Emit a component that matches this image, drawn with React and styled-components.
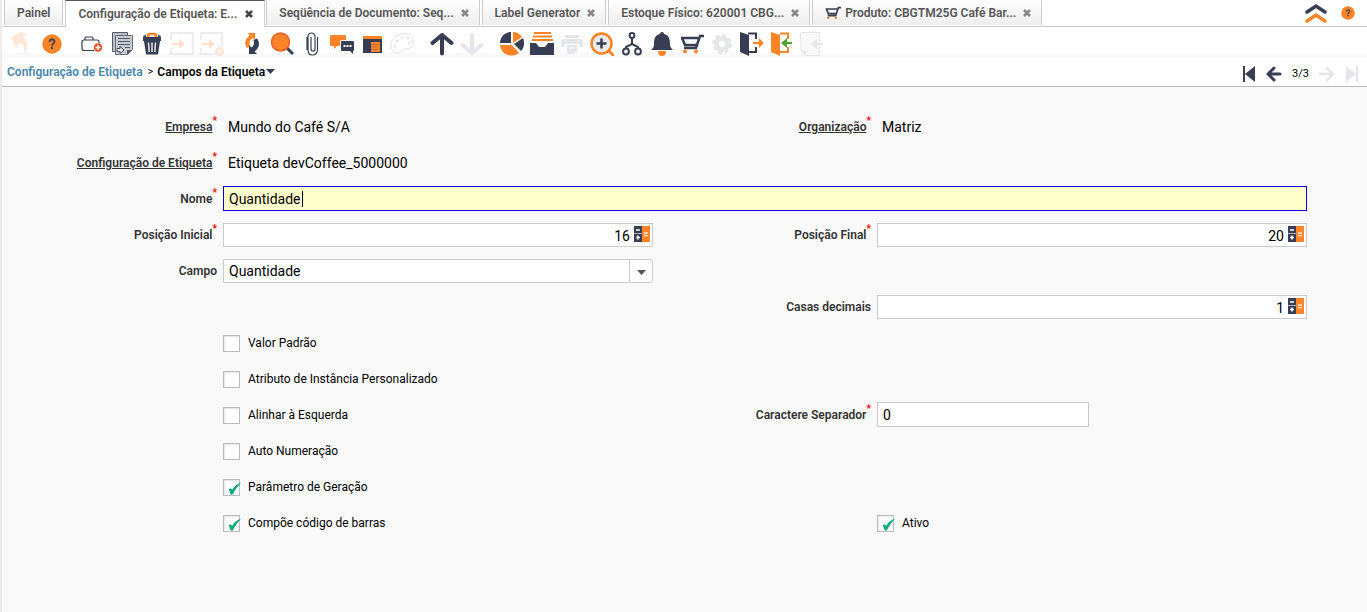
import React, { useState } from "react";
import styled, { createGlobalStyle, css } from "styled-components";

const navy = "#373d52";
const orange = "#ff8427";

const GlobalStyle = createGlobalStyle`
  * { box-sizing: border-box; }
  html, body { margin: 0; background: #f9f9f9; }
  body, button, input, select {
    font-family: Roboto, "Liberation Sans", sans-serif;
    font-size: 12px;
    color: #000;
  }
  button { padding: 0; border: 0; background: none; cursor: pointer; }
  svg { display: block; }
`;

const Page = styled.div`
  min-height: 100vh;
  border-left: 2px solid #ececec;
  background: #f9f9f9;
`;

const TabBar = styled.header`
  display: flex;
  height: 27px;
  padding-left: 2px;
  background: linear-gradient(#ccc, #ccc) bottom / 100% 1px no-repeat #fff;
`;

const Tab = styled.div`
  display: flex;
  align-items: center;
  gap: ${(p) => (p.$active ? "7px" : "6px")};
  height: 25px;
  margin-right: 2px;
  padding: 0 ${(p) => (p.$fixed ? "12px" : "9px")} 0 12px;
  border-left: 1px solid #ccc;
  border-right: 1px solid #ccc;
  background: linear-gradient(#fefefe, #eee);
  ${(p) =>
    p.$active &&
    css`
      height: 27px;
      margin-right: 1px;
      padding-right: 10px;
      padding-bottom: 1px;
      border-top: 1px solid #555;
      background: #fff;
    `}
`;

const TabTitle = styled.button`
  display: flex;
  align-items: center;
  gap: 4px;
  line-height: 16px;
  font-weight: 600;
  color: #555;
  white-space: nowrap;
`;

const TabClose = styled.button`
  color: ${(p) => (p.$active ? "#444" : "#888")};
`;

const TabBarEnd = styled.div`
  display: flex;
  align-items: center;
  gap: 14px;
  height: 25px;
  margin-left: auto;
  padding-right: 12px;
`;

const Toolbar = styled.div`
  display: flex;
  gap: 16px;
  height: 30px;
  padding: 5px 8px 0;
  background: linear-gradient(#fff 26px, #f9f9f9 26px);
`;

const ToolGroup = styled.div`
  display: flex;
  gap: 6px;
`;

const ToolButton = styled.button`
  width: 24px;
  height: 24px;
`;

const Breadcrumb = styled.nav`
  display: flex;
  align-items: center;
  height: 30px;
  padding: 0 8px 0 5px;
  border-bottom: 1px solid #bbb;
  background: #fff;
  font-weight: 600;
  line-height: 16px;
`;

const CrumbLink = styled.a`
  color: #4a85ab;
  text-decoration: none;
`;

const CrumbSeparator = styled.span`
  margin: 0 4px 0 5px;
  font-weight: 400;
  font-size: 11px;
`;

const CrumbMenu = styled.button`
  display: flex;
  align-items: center;
  gap: 1px;
  font-weight: 600;
`;

const Pager = styled.div`
  display: flex;
  align-items: center;
  gap: 10px;
  margin-left: auto;
  padding-top: 4px;
  font-weight: 400;
  font-size: 11px;
`;

const Form = styled.form`
  display: grid;
  grid-template-columns:
    minmax(0, 218fr) minmax(0, 436fr) minmax(0, 218fr)
    minmax(0, 436fr) minmax(0, 57fr);
  grid-auto-rows: 36px;
  padding: 22px 0;
`;

const LabelCell = styled.div`
  grid-column: ${(p) => p.$col};
  grid-row: ${(p) => p.$row};
  display: flex;
  justify-content: flex-end;
  align-items: center;
  padding-right: 3px;
`;

const Label = styled.label`
  color: #333;
  font-weight: 600;
  line-height: 16px;
  white-space: nowrap;
  text-decoration: ${(p) => (p.$linked ? "underline" : "none")};
`;

const Required = styled.span`
  align-self: flex-start;
  margin-top: 6px;
  color: #f00;
  font-size: 10px;
  line-height: 12px;
  font-weight: 700;
`;

const FieldCell = styled.div`
  grid-column: ${(p) => p.$col};
  grid-row: ${(p) => p.$row};
  display: flex;
  align-items: ${(p) => (p.$centered ? "center" : "flex-end")};
  padding: 0 3px ${(p) => (p.$centered ? "0" : "6px")};
`;

const ReadOnlyValue = styled.output`
  padding: 0 5px;
  font-size: 14px;
  line-height: 24px;
`;

const InputFrame = styled.div`
  position: relative;
  flex: ${(p) => (p.$short ? "0 0 50%" : "1")};
  padding-right: ${(p) => (p.$short ? "3px" : "0")};
  display: flex;
`;

const TextInput = styled.input`
  width: 100%;
  height: 25px;
  padding: 0 5px;
  border: 1px solid ${(p) => (p.$active ? "#0000e0" : "#ccc")};
  border-radius: 0;
  outline: none;
  background: ${(p) => (p.$active ? "#ffffcc" : "#fff")};
  font-size: 14px;
`;

const Caret = styled.span`
  position: absolute;
  left: 79px;
  top: 5px;
  width: 1px;
  height: 16px;
  background: #000;
`;

const NumberBox = styled.div`
  flex: 1;
  display: flex;
  height: 24px;
  border: 1px solid #ccc;
  background: #fff;
`;

const NumberInput = styled.input`
  flex: 1;
  min-width: 0;
  padding: 2px 3px 0;
  border: 0;
  outline: none;
  background: none;
  font-size: 14px;
  text-align: right;
`;

const CalculatorButton = styled.button`
  width: 19px;
  padding: 2px 2px 4px 1px;
`;

const SelectBox = styled.div`
  flex: 1;
  display: grid;
  grid-template-columns: minmax(0, 1fr) 23px;
  height: 24px;
  border: 1px solid #ccc;
  border-radius: 0 3px 3px 0;
  background: #fff;
`;

const Select = styled.select`
  grid-area: 1 / 1 / 2 / 3;
  padding: 0 5px;
  border: 0;
  outline: none;
  appearance: none;
  background: none;
  font-size: 14px;
`;

const SelectArrow = styled.span`
  grid-area: 1 / 2;
  display: flex;
  align-items: center;
  justify-content: center;
  padding-top: 3px;
  border-left: 1px solid #ccc;
  pointer-events: none;
`;

const CheckLabel = styled.label`
  display: flex;
  gap: 8px;
  line-height: 16px;
`;

const CheckFrame = styled.span`
  display: grid;
  width: 17px;
  height: 17px;

  svg {
    grid-area: 1 / 1;
    pointer-events: none;
    overflow: visible;
    display: none;
    z-index: 1;
  }
  input:checked + svg { display: block; }
`;

const CheckInput = styled.input`
  grid-area: 1 / 1;
  width: 17px;
  height: 17px;
  margin: 0;
  appearance: none;
  border: 1px solid #bbb;
  background: #fff;
  box-shadow: inset 1px 1px 2px #e4e4e4;
`;

function Icon({ w = 24, h = 24, box, children }) {
  return (
    <svg width={w} height={h} viewBox={box || `0 0 ${w} ${h}`} fill="none" aria-hidden="true">
      {children}
    </svg>
  );
}

const peach = "#ffe8d8";
const faint = "#e4e6e9";

const icons = {
  undo: <path d="M1 5 11 0l6 2-4 3c5 4 6 10 2 17 0-6-2-10-6-11l-3 6Z" fill={peach} />,
  help: (
    <>
      <circle cx="12" cy="12" r="9.7" fill={orange} />
      <path d="M9.500 10c0-3.400 5-3.400 5-.4 0 2-2.500 2-2.500 4.200" stroke={navy} strokeWidth="1.800" />
      <path d="M11 15h2v2h-2z" fill={navy} />
    </>
  ),
  create: (
    <>
      <path d="M14 18.500H4q-2 0-2-2V10q0-2 2-2h13q2 0 2 2v1M5 7.500V6q0-1 1-1h6q1 0 1 1v1.500" stroke={navy} strokeWidth="1.200" />
      <circle cx="18" cy="15.500" r="4.200" fill="#e9532a" />
      <path d="M18 13v5M15.500 15.500h5" stroke="#fff" strokeWidth="1.500" />
    </>
  ),
  copy: (
    <>
      <path d="M2.500.5h15v19h-15z" fill="#b9bec7" stroke="#555b68" />
      <path d="M5.500 3.500h17v14l-5 5h-12z" fill="#c6cad2" stroke="#6a707d" />
      <path d="M8 6.500h12M8 9.500h12M8 12.500h12M15 15.500h5" stroke="#555b68" />
      <path d="M17 23v-5h5z" fill="#555b68" />
      <path d="M7 16.500h3v-2l4 3.500-4 3.500v-2H7z" fill="#e6e8ec" stroke="#454b5a" />
    </>
  ),
  remove: (
    <>
      <path d="M8 5V4q0-2 2-2h4q2 0 2 2v1" stroke={orange} strokeWidth="2.500" />
      <path d="M3 6q0-3 3-3v2h12V3q3 0 3 3v3H3z" fill={navy} />
      <path d="M4 9h16l-2 13.500H6z" fill={navy} />
      <path d="m8.500 10.500.7 9.500m5.600 0 .7-9.500M12 10.500v9.500" stroke="#e4e6ea" strokeWidth="1.500" />
    </>
  ),
  save: (
    <>
      <path d="M1 8V1h22v21H1v-6" stroke="#e6e7ea" strokeWidth="1.500" />
      <path d="M2 12h9" stroke="#ffe0cb" strokeWidth="2" />
      <path d="m9 7 6 5-6 5z" fill="#ffe0cb" />
    </>
  ),
  saveNew: (
    <>
      <path d="M1 8V1h21v14M15 22H1v-6" stroke="#e6e7ea" strokeWidth="1.500" />
      <path d="M2 12h8" stroke="#ffe0cb" strokeWidth="2" />
      <path d="m9 7 6 5-6 5z" fill="#ffe0cb" />
      <circle cx="19.500" cy="19.500" r="4.500" fill="#ffe5d5" />
      <path d="M19.500 17v5M17 19.500h5" stroke="#fff" />
    </>
  ),
  refresh: (
    <>
      <path d="M8 1h7v7l-2.500-2C10 8 9 10 10 14l-3 2C4 12 5 7 9.500 3.500z" fill={orange} />
      <path d="M9 22V13l2.500 2.500c2.500-2 3-4 2-7.500L17 6.500c3 4 3 9-2.500 13L17 22z" fill={navy} />
    </>
  ),
  find: (
    <>
      <path d="m16 15 7 7" stroke={navy} strokeWidth="3" />
      <circle cx="10.500" cy="10" r="9" fill={orange} stroke="#e9602a" strokeWidth="1.500" />
    </>
  ),
  attach: (
    <path
      d="M11 5v12q0 2 2 2t2-2V5q0-4-3.500-4T8 5v13q0 5 4.500 5t5-5V5M7 5v13"
      stroke={navy}
      strokeWidth="1.200"
    />
  ),
  chat: (
    <>
      <path d="M1 3h14q1 0 1 1v4h-4q-2 0-2 2v4H7l-3 3v-3H1q-1 0-1-1V4q0-1 1-1Z" fill={orange} />
      <path d="M12 9h11q1 0 1 1v8q0 1-1 1v3l-3-3h-8q-1 0-1-1v-8q0-1 1-1Z" fill={navy} />
      <path d="M13.500 14h8" stroke="#fff" strokeWidth="2" strokeDasharray="2 1" />
    </>
  ),
  grid: (
    <>
      <path d="M3 4h19v17H3z" fill={navy} />
      <path d="M3 4h19v3H3zM11 10h9v10h-9z" fill={orange} />
      <path d="M11 12.500h7M11 15h7M11 17.500h7" stroke="#c07038" />
    </>
  ),
  palette: (
    <>
      <path d="M15 2C7 1 1 7 1 13s4 9 8 8 3-5 6-4 8-2 8-7-3-8-8-8Z" stroke="#dfe1e4" />
      <circle cx="5" cy="14" r="1.500" fill="#ffe6d8" />
      <circle cx="7" cy="9" r="1.500" fill={faint} />
      <circle cx="12" cy="6" r="1.500" fill="#ffe6d8" />
      <circle cx="18" cy="6" r="1.500" fill={faint} />
      <circle cx="19" cy="11" r="1.500" fill="#ffe6d8" />
    </>
  ),
  up: <path d="M12 21.500V3M2.500 11 12 3l9.500 8" stroke={navy} strokeWidth="4" strokeLinecap="round" strokeLinejoin="round" />,
  down: <path d="M12 2.500v18.500M2.500 13l9.500 8 9.500-8" stroke={faint} strokeWidth="4" strokeLinecap="round" strokeLinejoin="round" />,
  pie: (
    <>
      <path d="M11 0v11H0C0 5 5 0 11 0Z" fill={navy} />
      <path d="M13 0c4 0 7 2 9 5l-9 6z" fill={orange} />
      <path d="M23 6c2 5 1 10-2 13l-7-7z" fill={navy} />
      <path d="M0 13h12l7 8C11 27 1 22 0 13Z" fill={orange} />
    </>
  ),
  archive: (
    <>
      <path d="M4 1h17M3 4.500h19M2 8h21" stroke={orange} strokeWidth="1.800" />
      <path d="M0 11h6l3 4h6l3-4h6v12H0z" fill={navy} />
    </>
  ),
  print: (
    <>
      <path d="M5 3h14v3H5zM3 7h18q2 0 2 2v6h-4v-3H5v3H1V9q0-2 2-2ZM7 13h10v6l-3 3H7z" fill={faint} />
      <path d="M9 16h6" stroke="#fff" />
    </>
  ),
  zoom: (
    <>
      <path d="m18 18 5 5" stroke={orange} strokeWidth="3" strokeLinecap="round" />
      <circle cx="11.500" cy="11.500" r="10" fill="#e9ebee" stroke={orange} strokeWidth="2.500" />
      <path d="M11.500 6.500v10M6.500 11.500h10" stroke={navy} strokeWidth="2.500" />
    </>
  ),
  workflow: (
    <g stroke={navy} strokeWidth="2">
      <circle cx="12" cy="3.500" r="2.400" />
      <circle cx="6" cy="19.500" r="2.900" />
      <circle cx="18" cy="19.500" r="2.900" />
      <path d="M12 6v6L6 15v2m6-5 6 3v2" />
    </g>
  ),
  bell: (
    <>
      <path d="M8 19h8q0 5-4 5t-4-5Z" fill={orange} />
      <path d="M12 0q2 0 2 2c5 1 6 5 6 10 0 3 1 4 3 6H1c2-2 3-3 3-6C4 7 5 3 10 2q0-2 2-2Z" fill={navy} />
    </>
  ),
  cart: (
    <>
      <path d="M24 4h-4l-4 12H4M1 6h17M2 6l3 7h11" stroke={navy} strokeWidth="2.500" />
      <circle cx="5" cy="19.500" r="2" fill={orange} />
      <circle cx="16" cy="19.500" r="2" fill={orange} />
    </>
  ),
  gear: (
    <>
      <circle cx="12" cy="12" r="8.500" stroke={faint} strokeWidth="3" strokeDasharray="3.800 2.875" />
      <circle cx="12" cy="12" r="5.500" stroke={faint} strokeWidth="5" />
    </>
  ),
  exit: (
    <>
      <path d="M8 1.500h8V7M16 15v5H8" stroke={navy} strokeWidth="2" />
      <path d="m0 0 9 3v21l-9-4z" fill={navy} />
      <path d="M13 11h8" stroke={orange} strokeWidth="2.200" />
      <path d="m19 6 5 5-5 5z" fill={orange} />
    </>
  ),
  enter: (
    <>
      <path d="M10 1.500h8V7M18 15v5h-8" stroke={orange} strokeWidth="2" />
      <path d="m1 0 9 3v21l-9-4z" fill={orange} />
      <path d="M15 11h7" stroke="#52a435" strokeWidth="2.200" />
      <path d="m17 6-6 5 6 5z" fill="#52a435" />
    </>
  ),
  page: (
    <>
      <path d="M.5.500h19v23H6l-5-5z" fill="#f8f8f8" stroke={faint} />
      <path d="M1 18.500h5v5z" fill={faint} />
      <path d="M14 12h9" stroke={faint} strokeWidth="2.200" />
      <path d="m17 7-6 5 6 5z" fill={faint} />
    </>
  ),
};

const toolGroups = [
  [["undo", "Desfazer"], ["help", "Ajuda"]],
  [
    ["create", "Novo"], ["copy", "Copiar"], ["remove", "Excluir"],
    ["save", "Salvar"], ["saveNew", "Salvar e criar"],
  ],
  [
    ["refresh", "Atualizar"], ["find", "Localizar"], ["attach", "Anexo"],
    ["chat", "Conversa"], ["grid", "Grade"], ["palette", "Personalizar"],
  ],
  [["up", "Registro pai"], ["down", "Detalhe"]],
  [
    ["pie", "Relatório"], ["archive", "Arquivo"], ["print", "Imprimir"],
    ["zoom", "Zoom"], ["workflow", "Fluxo de trabalho"], ["bell", "Solicitações"],
    ["cart", "Produto"], ["gear", "Processo"], ["exit", "Exportar"],
    ["enter", "Importar"], ["page", "Arquivo CSV"],
  ],
];

const tabs = [
  { title: "Painel", fixed: true },
  { title: "Configuração de Etiqueta: E...", active: true },
  { title: "Seqüência de Documento: Seq..." },
  { title: "Label Generator" },
  { title: "Estoque Físico: 620001 CBG..." },
  { title: "Produto: CBGTM25G Café Bar...", cart: true },
];

const checks = [
  [7, 2, "Valor Padrão", false],
  [8, 2, "Atributo de Instância Personalizado", false],
  [9, 2, "Alinhar à Esquerda", false],
  [10, 2, "Auto Numeração", false],
  [11, 2, "Parâmetro de Geração", true],
  [12, 2, "Compõe código de barras", true],
  [12, 4, "Ativo", true],
];

function FieldLabel({ row, col = 1, id, required, linked, children }) {
  return (
    <LabelCell $row={row} $col={col}>
      <Label htmlFor={id} $linked={linked}>{children}</Label>
      {required && <Required aria-hidden="true">*</Required>}
    </LabelCell>
  );
}

function NumberField({ id, row, col, initial }) {
  const [value, setValue] = useState(initial);
  return (
    <FieldCell $row={row} $col={col}>
      <NumberBox>
        <NumberInput id={id} inputMode="numeric" value={value} onChange={(e) => setValue(e.target.value)} />
        <CalculatorButton type="button" aria-label="Calculadora">
          <Icon w={16} h={16}>
            <path d="M0 0h8v16H0z" fill={navy} />
            <path d="M8 0h8v16H8z" fill={orange} />
            <path d="M0 7.500h8" stroke="#aeb2bc" />
            <path d="M2 4h4M2 11.500h4M4 9.500v4" stroke="#fff" strokeWidth="1.500" />
            <path d="M10 7h4M10 9.500h4" stroke="#ffe3cf" strokeWidth="1.300" />
          </Icon>
        </CalculatorButton>
      </NumberBox>
    </FieldCell>
  );
}

function CheckField({ row, col, label, initial }) {
  return (
    <FieldCell $row={row} $col={col} $centered>
      <CheckLabel>
        <CheckFrame>
          <CheckInput type="checkbox" defaultChecked={initial} />
          <Icon w={17} h={17}>
            <path d="M5.500 10.500c1.500-1.500 3-1 3.500.5 2-3.500 5-6.500 9-7-3 2.500-6 7-8 11-.5.800-2 1-2.500 0-.5-1.500-1-3.500-2-4.500Z" fill="#0aa978" />
          </Icon>
        </CheckFrame>
        {label}
      </CheckLabel>
    </FieldCell>
  );
}

export default function App() {
  return (
    <>
      <GlobalStyle />
      <Page>
        <TabBar>
          {tabs.map((tab) => (
            <Tab key={tab.title} $active={tab.active} $fixed={tab.fixed}>
              <TabTitle type="button">
                {tab.cart && <Icon w={16} h={16} box="0 0 24 24">{icons.cart}</Icon>}
                {tab.title}
              </TabTitle>
              {!tab.fixed && (
                <TabClose type="button" aria-label="Fechar" $active={tab.active}>
                  <Icon w={10} h={10}>
                    <path d="m2 2 6 6m0-6L2 8" stroke="currentColor" strokeWidth="2.600" />
                  </Icon>
                </TabClose>
              )}
            </Tab>
          ))}
          <TabBarEnd>
            <button type="button" aria-label="Recolher cabeçalho">
              <Icon w={22} h={20}>
                <path d="m2 9 9-6 9 6" stroke={navy} strokeWidth="3.500" strokeLinecap="round" />
                <path d="m2 18 9-6 9 6" stroke={orange} strokeWidth="3.500" strokeLinecap="round" />
              </Icon>
            </button>
            <button type="button" aria-label="Ajuda">
              <Icon w={14} h={14} box="2 2 20 20">{icons.help}</Icon>
            </button>
          </TabBarEnd>
        </TabBar>

        <Toolbar role="toolbar">
          {toolGroups.map((group) => (
            <ToolGroup key={group[0][0]}>
              {group.map(([name, label]) => (
                <ToolButton key={name} type="button" aria-label={label}>
                  <Icon>{icons[name]}</Icon>
                </ToolButton>
              ))}
            </ToolGroup>
          ))}
        </Toolbar>

        <Breadcrumb>
          <CrumbLink href="#configuracao">Configuração de Etiqueta</CrumbLink>
          <CrumbSeparator>&gt;</CrumbSeparator>
          <CrumbMenu type="button">
            Campos da Etiqueta
            <Icon w={9} h={5}><path d="M0 0h9L4.500 5z" fill={navy} /></Icon>
          </CrumbMenu>
          <Pager>
            <button type="button" aria-label="Primeiro">
              <Icon w={14} h={16}>
                <path d="M2 0v16" stroke={navy} strokeWidth="2" />
                <path d="M13 0v16L3 8z" fill={navy} />
              </Icon>
            </button>
            <button type="button" aria-label="Anterior">
              <Icon w={16} h={16}>
                <path d="M14 8H2m6-6L2 8l6 6" stroke={navy} strokeWidth="3" strokeLinecap="round" strokeLinejoin="round" />
              </Icon>
            </button>
            <span>3/3</span>
            <button type="button" aria-label="Próximo">
              <Icon w={16} h={16}>
                <path d="M1 8h13M8 2l6 6-6 6" stroke={faint} strokeWidth="2.500" strokeLinecap="round" strokeLinejoin="round" />
              </Icon>
            </button>
            <button type="button" aria-label="Último">
              <Icon w={14} h={16}>
                <path d="M12 0v16" stroke={faint} strokeWidth="2" />
                <path d="M1 0v16l10-8z" fill={faint} />
              </Icon>
            </button>
          </Pager>
        </Breadcrumb>

        <Form onSubmit={(e) => e.preventDefault()}>
          <FieldLabel row={1} id="empresa" required linked>Empresa</FieldLabel>
          <FieldCell $row={1} $col={2}>
            <ReadOnlyValue id="empresa">Mundo do Café S/A</ReadOnlyValue>
          </FieldCell>
          <FieldLabel row={1} col={3} id="organizacao" required linked>Organização</FieldLabel>
          <FieldCell $row={1} $col={4}>
            <ReadOnlyValue id="organizacao">Matriz</ReadOnlyValue>
          </FieldCell>

          <FieldLabel row={2} id="configuracao" required linked>Configuração de Etiqueta</FieldLabel>
          <FieldCell $row={2} $col={2}>
            <ReadOnlyValue id="configuracao">Etiqueta devCoffee_5000000</ReadOnlyValue>
          </FieldCell>

          <FieldLabel row={3} id="nome" required>Nome</FieldLabel>
          <FieldCell $row={3} $col="2 / 5">
            <InputFrame>
              <TextInput id="nome" $active defaultValue="Quantidade" />
              <Caret />
            </InputFrame>
          </FieldCell>

          <FieldLabel row={4} id="inicial" required>Posição Inicial</FieldLabel>
          <NumberField id="inicial" row={4} col={2} initial="16" />
          <FieldLabel row={4} col={3} id="final" required>Posição Final</FieldLabel>
          <NumberField id="final" row={4} col={4} initial="20" />

          <FieldLabel row={5} id="campo">Campo</FieldLabel>
          <FieldCell $row={5} $col={2}>
            <SelectBox>
              <Select id="campo" defaultValue="Quantidade">
                <option>Quantidade</option>
              </Select>
              <SelectArrow>
                <Icon w={9} h={5}><path d="M0 0h9L4.500 5z" fill="#555" /></Icon>
              </SelectArrow>
            </SelectBox>
          </FieldCell>

          <FieldLabel row={6} col={3} id="casas">Casas decimais</FieldLabel>
          <NumberField id="casas" row={6} col={4} initial="1" />

          <FieldLabel row={9} col={3} id="separador" required>Caractere Separador</FieldLabel>
          <FieldCell $row={9} $col={4}>
            <InputFrame $short>
              <TextInput id="separador" defaultValue="0" />
            </InputFrame>
          </FieldCell>

          {checks.map(([row, col, label, initial]) => (
            <CheckField key={label} row={row} col={col} label={label} initial={initial} />
          ))}
        </Form>
      </Page>
    </>
  );
}
